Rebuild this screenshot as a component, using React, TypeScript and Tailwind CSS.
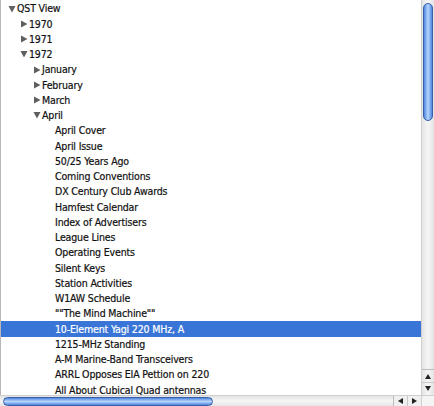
import { ReactNode } from "react";

type Row = {
  label: string;
  depth: number;
  toggle?: "open" | "closed";
  selected?: boolean;
};

const rows: Row[] = [
  { label: "QST View", depth: 0, toggle: "open" },
  { label: "1970", depth: 1, toggle: "closed" },
  { label: "1971", depth: 1, toggle: "closed" },
  { label: "1972", depth: 1, toggle: "open" },
  { label: "January", depth: 2, toggle: "closed" },
  { label: "February", depth: 2, toggle: "closed" },
  { label: "March", depth: 2, toggle: "closed" },
  { label: "April", depth: 2, toggle: "open" },
  { label: "April Cover", depth: 3 },
  { label: "April Issue", depth: 3 },
  { label: "50/25 Years Ago", depth: 3 },
  { label: "Coming Conventions", depth: 3 },
  { label: "DX Century Club Awards", depth: 3 },
  { label: "Hamfest Calendar", depth: 3 },
  { label: "Index of Advertisers", depth: 3 },
  { label: "League Lines", depth: 3 },
  { label: "Operating Events", depth: 3 },
  { label: "Silent Keys", depth: 3 },
  { label: "Station Activities", depth: 3 },
  { label: "W1AW Schedule", depth: 3 },
  { label: "\"\"The Mind Machine\"\"", depth: 3 },
  { label: "10-Element Yagi 220 MHz, A", depth: 3, selected: true },
  { label: "1215-MHz Standing", depth: 3 },
  { label: "A-M Marine-Band Transceivers", depth: 3 },
  { label: "ARRL Opposes EIA Pettion on 220", depth: 3 },
  { label: "All About Cubical Quad antennas", depth: 3 },
];

function Triangle({ open }: { open: boolean }) {
  return open ? (
    <svg width="8" height="8" viewBox="0 0 8 8" className="shrink-0">
      <path d="M0.5 1 L7.5 1 L4 7.5 Z" fill="#5f5f5f" />
    </svg>
  ) : (
    <svg width="8" height="8" viewBox="0 0 8 8" className="shrink-0">
      <path d="M1 0.5 L7.5 4 L1 7.5 Z" fill="#5f5f5f" />
    </svg>
  );
}

function TreeRow({ row }: { row: Row }) {
  const indent = ["pl-[7px]", "pl-[19px]", "pl-[32px]", "pl-[54px]"][row.depth];
  return (
    <div
      className={`flex h-[15.25px] items-center ${indent} ${
        row.selected ? "bg-[#3875d7] text-white" : "text-[#111]"
      }`}
    >
      {row.toggle && <Triangle open={row.toggle === "open"} />}
      <span className={`[-webkit-text-stroke:0.2px] ${row.toggle ? "pl-[1px]" : ""}`}>{row.label}</span>
    </div>
  );
}

function ArrowBtn({ children }: { children: ReactNode }) {
  return (
    <div className="flex h-[9px] w-[9px] items-center justify-center">{children}</div>
  );
}

export default function App() {
  return (
    <div
      className="flex h-[406px] w-[434px] flex-col overflow-hidden bg-white text-[10.5px] leading-none tracking-[-0.15px]"
      style={{ fontFamily: '"DejaVu Sans Condensed", "DejaVu Sans", Verdana, sans-serif' }}
    >
      <div className="flex min-h-0 flex-1">
        <div className="min-w-0 flex-1 overflow-hidden border-l border-[#b8b8b8] pt-px">
          {rows.map((row) => (
            <TreeRow key={row.label} row={row} />
          ))}
        </div>
        {/* vertical scrollbar */}
        <div className="flex w-[13px] flex-col border-l border-[#cfcfcf] bg-linear-to-r from-[#e4e4e4] via-[#f6f6f6] to-[#e4e4e4]">
          <div className="flex-1 px-[1px] pt-[3px]">
            <div className="h-[118px] rounded-full border border-[#3a5fa8] bg-linear-to-r from-[#4f86e0] via-[#b8d6fb] to-[#4f86e0]" />
          </div>
          <div className="flex flex-col items-center gap-[1px] border-t border-[#bdbdbd] pb-[2px] pt-[2px]">
            <ArrowBtn>
              <svg width="6" height="5" viewBox="0 0 6 5">
                <path d="M3 0 L6 5 L0 5 Z" fill="#222" />
              </svg>
            </ArrowBtn>
            <div className="h-px w-full bg-[#c8c8c8]" />
            <ArrowBtn>
              <svg width="6" height="5" viewBox="0 0 6 5">
                <path d="M0 0 L6 0 L3 5 Z" fill="#222" />
              </svg>
            </ArrowBtn>
          </div>
        </div>
      </div>
      {/* horizontal scrollbar */}
      <div className="flex h-[11px] border-t border-[#cfcfcf]">
        <div className="flex flex-1 items-center bg-linear-to-b from-[#e4e4e4] via-[#f6f6f6] to-[#e4e4e4] py-[1px] pl-[3px]">
          <div className="h-[9px] w-[210px] rounded-full border border-[#3a5fa8] bg-linear-to-b from-[#4f86e0] via-[#b8d6fb] to-[#4f86e0]" />
        </div>
        <div className="flex items-center gap-[2px] border-l border-[#bdbdbd] bg-[#f0f0f0] px-[2px]">
          <ArrowBtn>
            <svg width="5" height="6" viewBox="0 0 5 6">
              <path d="M0 3 L5 0 L5 6 Z" fill="#222" />
            </svg>
          </ArrowBtn>
          <div className="h-full w-px bg-[#c8c8c8]" />
          <ArrowBtn>
            <svg width="5" height="6" viewBox="0 0 5 6">
              <path d="M0 0 L5 3 L0 6 Z" fill="#222" />
            </svg>
          </ArrowBtn>
        </div>
        <div className="w-[13px] border-l border-[#cfcfcf] bg-[#f4f4f4]" />
      </div>
    </div>
  );
}
